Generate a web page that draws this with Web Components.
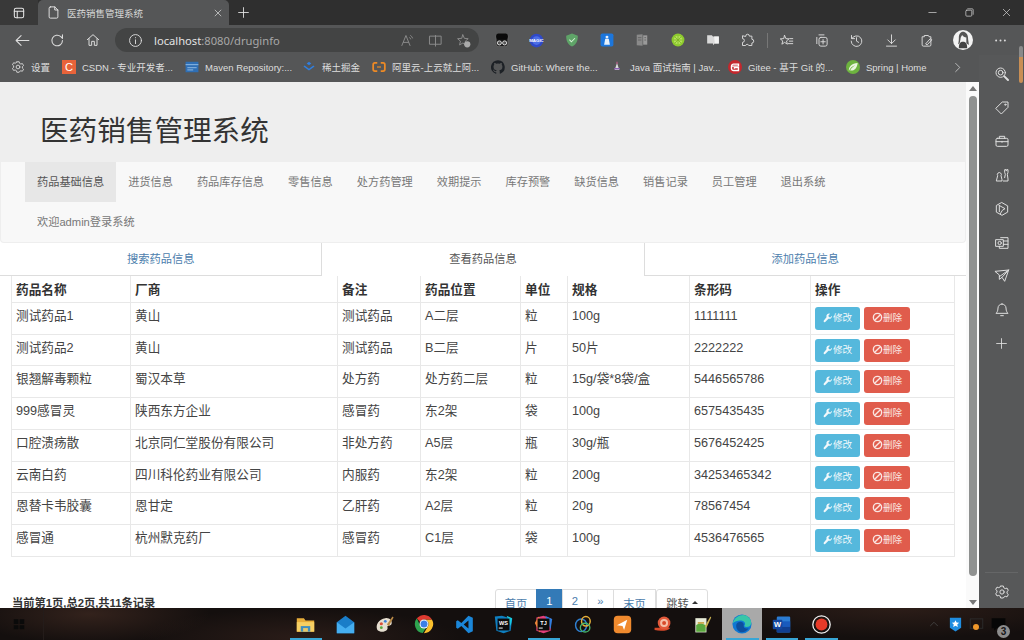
<!DOCTYPE html>
<html lang="zh">
<head>
<meta charset="utf-8">
<title>医药销售管理系统</title>
<style>
  html, body { margin: 0; height: 100%; overflow: hidden; background: #fff; }
  body { font-family: "Liberation Sans", "Noto Sans CJK SC", sans-serif; }
</style>
</head>
<body>
<browser-window>
  <tab-strip slot="tabs"></tab-strip>
  <nav-toolbar slot="toolbar"></nav-toolbar>
  <bookmark-bar slot="bookmarks"></bookmark-bar>
  <drug-page slot="page">
    <app-header>医药销售管理系统</app-header>
    <app-nav></app-nav>
    <sub-tabs></sub-tabs>
    <drug-table></drug-table>
    <pager-bar></pager-bar>
  </drug-page>
  <page-scrollbar slot="scrollbar"></page-scrollbar>
  <side-rail slot="rail"></side-rail>
  <task-bar slot="taskbar"></task-bar>
</browser-window>

<script>
const html = String.raw;

// Line icons use currentColor, the rest carry their own colours
const line = (body, sw = 1.5) => html`<g fill="none" stroke="currentColor" stroke-width="${sw}" stroke-linecap="round" stroke-linejoin="round">${body}</g>`;
const GEAR = 'M10 3h4l.6 2.6 2.3 1.3 2.6-.8 2 3.5-2 1.8v2.6l2 1.8-2 3.5-2.6-.8-2.3 1.3L14 21h-4l-.6-2.6-2.3-1.3-2.6.8-2-3.5 2-1.8v-2.6l-2-1.8 2-3.5 2.6.8 2.3-1.3z';

const ICONS = {
  tabs: line('<rect x="4" y="4" width="16" height="16" rx="3"/><path d="M4 9h16M9 9v11"/>', 1.8),
  doc: line('<path d="M7 3h7l5 5v11a2 2 0 0 1-2 2H7a2 2 0 0 1-2-2V5a2 2 0 0 1 2-2zM14 3v5h5"/>'),
  close: line('<path d="M5 5l14 14M19 5L5 19"/>', 1.6),
  plus: line('<path d="M12 3v18M3 12h18"/>', 1.6),
  min: line('<path d="M4 12h16"/>', 1.6),
  max: line('<rect x="4" y="7" width="13" height="13" rx="2"/><path d="M8 4h10a2 2 0 0 1 2 2v10"/>', 1.6),
  back: line('<path d="M21 12H3M10 5l-7 7 7 7"/>'),
  refresh: line('<path d="M19 12a7.5 7.5 0 1 1-2.3-5.4L19 9V4"/>'),
  home: line('<path d="M3.5 11.5L12 4l8.5 7.5M6 10v10h4v-6h4v6h4V10"/>'),
  info: line('<circle cx="12" cy="12" r="9.5"/><path d="M12 11v6M12 7.4v.3"/>'),
  aloud: line('<path d="M3 20L9.5 4 16 20M5.5 15h8M17 4c1.5 1 2.5 2.4 3 4M15.5 7.5c.8.5 1.3 1.2 1.5 2"/>'),
  split: line('<path d="M12 4v17M3 5h18v13H3z"/>'),
  favadd: line('<path d="M11 3l2.4 5.6 6.1.5-4.6 4 1.4 6L11 16l-5.3 3.1 1.4-6-4.6-4 6.1-.5z"/>') + '<circle cx="18" cy="18" r="5" fill="#aaa"/>',
  gear: line(`<path d="${GEAR}"/><circle cx="12" cy="12" r="3.2"/>`),
  puzzle: line('<path d="M9 5a3 3 0 0 1 6 0h4v5a3 3 0 0 1 0 6v4h-5a2.6 2.6 0 0 0-5 0H4v-5a3 3 0 0 0 0-6V5z"/>'),
  favs: line('<path d="M9 4l2 5 5 .4-4 3.3 1.4 5.2L9 15l-4.4 2.9L6 12.7 2 9.4 7 9zM17 9h5M16.5 13h5.5M15 17h7"/>'),
  collect: line('<path d="M8 3h8M4.500 7v10"/><rect x="8" y="7" width="13" height="14" rx="3"/><path d="M14.500 10.500v7M11 14h7"/>'),
  history: line('<path d="M4 4v5h5M4.500 9a8.500 8.500 0 1 1-1 4M12 7.500V13l3.500 2"/>'),
  download: line('<path d="M12 3v14M6 11l6 6 6-6M4 21h16"/>'),
  perf: line('<path d="M9 4h6l1 2h3v13a2 2 0 0 1-2 2H7a2 2 0 0 1-2-2V6h3zM11 17l7-8 2.500 2-7 7.500z"/>'),
  dots: '<g fill="currentColor"><circle cx="5" cy="12" r="1.6"/><circle cx="12" cy="12" r="1.6"/><circle cx="19" cy="12" r="1.6"/></g>',
  chev: line('<path d="M8 3l9 9-9 9"/>', 1.6),
  lens: line('<circle cx="10" cy="10" r="7"/><circle cx="10" cy="10" r="3.5"/><path d="M15.500 15.500l5.500 5.500" stroke-width="3"/>'),
  tag: line('<path d="M13 3h8v8L11 21l-8-8z"/><circle cx="17" cy="7" r="1"/>'),
  brief: line('<rect x="3" y="8" width="18" height="12" rx="2"/><path d="M8 8V5h8v3M3 13h18M12 12.500v1.500"/>'),
  chess: line('<path d="M4 21h8v-2l-1.500-6a3 3 0 1 0-5 0L4 19zM14 21h7v-3l-1-7 1-3V4h-2v1.500h-1V4h-2v4l1 3-1 5"/>'),
  bing: line('<path d="M12 2.500l8.500 4.800v9.400L12 21.500l-8.500-4.800V7.300zM7.500 6.500l9 5-4 2.500-3 5"/><path d="M8 7v9"/>'),
  outlook: line('<path d="M10 4h11v16H8v-3M3 7h11v10H3zM14 9h7M14 14h7"/><circle cx="8.500" cy="12" r="2.500"/>'),
  plane: line('<path d="M2 5l20-2-6 17-4-6-4 3v-6zM22 3L8 13M22 3l-10 11"/>'),
  bell: line('<path d="M12 3a6 6 0 0 0-6 6c0 5-2 7-3 8h18c-1-1-3-3-3-8a6 6 0 0 0-6-6zM10 20.500h4"/>'),
  wrench: '<path fill="currentColor" d="M21.500 6.500l-4 4-3.500-1-1-3.500 4-4a6.500 6.500 0 0 0-8.600 8L2 17.800a2.400 2.400 0 0 0 4 3.200l7-7.400a6.500 6.500 0 0 0 8.500-7.100z"/>',
  ban: line('<circle cx="12" cy="12" r="9"/><path d="M5.800 18.200L18.200 5.800"/>', 3),

  // Extensions
  glasses: '<rect x="2" y="1" width="20" height="22" rx="4" fill="#151515" stroke="#888" stroke-width=".8"/><rect x="2" y="1" width="20" height="10" rx="4" fill="#0a0a0a"/><g fill="#555" stroke="#eee" stroke-width="1.500"><circle cx="7.500" cy="17" r="3.500"/><circle cx="16.500" cy="17" r="3.500"/></g>',
  magic: '<circle cx="12" cy="12" r="11" fill="#2f49c8"/><circle cx="12" cy="12" r="7" fill="#4c6ee8"/><text x="12" y="14.500" font-size="7" font-weight="700" text-anchor="middle" fill="#fff" font-family="Liberation Sans">MAGIC</text>',
  shield: '<path d="M12 1l10 3.500c0 9-2.500 15-10 18.500C4.500 19.500 2 13.500 2 4.500z" fill="#5fa468"/><path d="M7.500 11.500l3.500 3.500 6-6" fill="none" stroke="#d8f0d8" stroke-width="1.800"/>',
  bluebag: '<rect x="1" y="1" width="22" height="22" rx="3" fill="#1c76dc"/><path d="M7 20l2-10h6l2 10z" fill="#e6f0fa"/><circle cx="12" cy="7" r="2.500" fill="#e6f0fa"/>',
  graybook: '<path d="M3 3l10-1v20l-10-1z" fill="#8a8a8a"/><path d="M14 4h7v16h-7z" fill="#9a9a9a"/><path d="M5 8h6M5 12h6M16 8h3M16 12h3" stroke="#5a5a5a" stroke-width="1.300"/>',
  lime: '<circle cx="12" cy="12" r="11" fill="#8ecb2e"/><circle cx="12" cy="12" r="7.500" fill="#b5e25a"/><path d="M12 4v16M4 12h16M6.500 6.500l11 11M17.500 6.500l-11 11" stroke="#7ab322" stroke-width="1.300"/>',
  flag: '<path d="M2 4h8l2 2h10v12h-7l-3 3v-3H2z" fill="#d9d9d9"/><path d="M14 6h8v12h-7z" fill="#f2f2f2"/>',
  avatar: '<circle cx="12" cy="12" r="12" fill="#f3f3f3"/><path d="M7 22c0-5 1-8 5-8s5 3 5 8z" fill="#444"/><path d="M7 9c0-4 2-7 5-7s6 3 6 7c0 3 1 6 1 9l-3-2V9c-2 0-4-1-5-3-1 2-2 3-2 5l-1 5-2 1c1-3 1-5 1-8z" fill="#555"/>',

  // Bookmarks
  csdn: '<rect width="24" height="24" fill="#e8633a"/><text x="12" y="19" font-size="19" text-anchor="middle" fill="#fff" font-family="Liberation Sans">C</text>',
  maven: '<rect x="1" y="3" width="22" height="18" fill="#2f6fb5"/><path d="M1 8h22" stroke="#9cc3ea" stroke-width="1.500"/><path d="M4 13h16M4 17h10" stroke="#7aa9d8" stroke-width="2"/>',
  juejin: '<path d="M12 3l4 3-4 3-4-3z" fill="#2f7fe0"/><path d="M4.500 9.500L12 15l7.500-5.500 2 1.500-9.500 7-9.500-7z" fill="#2f7fe0"/>',
  aliyun: '<path d="M9 5H5a3 3 0 0 0-3 3v8a3 3 0 0 0 3 3h4M15 5h4a3 3 0 0 1 3 3v8a3 3 0 0 1-3 3h-4" fill="none" stroke="#ee8a25" stroke-width="3"/><path d="M8.500 12h7" stroke="#ee8a25" stroke-width="2"/>',
  github: '<path fill="#1d2126" d="M12 .3a12 12 0 0 0-3.800 23.400c.6.100.8-.3.800-.6v-2.200c-3.300.7-4-1.600-4-1.600-.6-1.400-1.400-1.800-1.400-1.800-1-.7.100-.7.100-.7 1.200 0 1.900 1.200 1.900 1.200 1 1.800 2.800 1.300 3.500 1 0-.8.400-1.300.7-1.600-2.700-.3-5.500-1.300-5.500-6 0-1.200.5-2.300 1.300-3.100-.2-.4-.6-1.600 0-3.200 0 0 1-.3 3.400 1.200a11.500 11.500 0 0 1 6 0c2.300-1.500 3.300-1.200 3.300-1.200.6 1.600.2 2.800 0 3.200.9.800 1.300 1.900 1.300 3.200 0 4.600-2.800 5.600-5.500 5.900.5.400.9 1 .9 2.200v3.300c0 .3.1.7.8.6A12 12 0 0 0 12 .3"/>',
  guide: '<path d="M12 5l4 12H8z" fill="#ddd"/><path d="M7 15h10" stroke="#8a5fb0" stroke-width="2.500"/><path d="M11 3h2v4h-2z" fill="#c05a8a"/>',
  gitee: '<circle cx="12" cy="12" r="12" fill="#c4272d"/><path d="M6 10.500h12V7H9.500A3.500 3.500 0 0 0 6 10.500v4A3.500 3.500 0 0 0 9.500 18H18v-5h-7v2" fill="none" stroke="#fff" stroke-width="2.400"/>',
  spring: '<circle cx="12" cy="12" r="12" fill="#6db33f"/><path d="M5 19c-1-8 5-13 15-14-1 9-6 14-13 13 2-4 5-7 9-9-5 1-9 5-11 10z" fill="#eaf6df"/>',

  // Taskbar
  win: '<path fill="#0a0a0a" d="M3 4h8v8H3zM13 4h8v8h-8zM3 14h8v7H3zM13 14h8v7h-8z"/>',
  folder: '<path d="M1 4h9l2 3h11v14H1z" fill="#e7ad3a"/><path d="M1 9h22v12H1z" fill="#f6cf63"/><path d="M6 14h12v7H6z" fill="#3f8fc0"/><path d="M9 16.500h6V21H9z" fill="#e8c768"/>',
  mail: '<path d="M1 9l11-8 11 8v14H1z" fill="#1a7dc8"/><path d="M1 9l11 8 11-8v14H1z" fill="#45aef0"/>',
  palette: '<path d="M3 19C0 12 5 5 13 4c5-1 9 3 8 7-1 3-4 2-5 3s1 3-1 5c-3 3-9 3-12 0z" fill="#e6ded0"/><circle cx="8" cy="11" r="2" fill="#d8503a"/><circle cx="13" cy="8" r="1.800" fill="#3a7fd8"/><circle cx="8" cy="16" r="1.800" fill="#58a83e"/><path d="M15 12l7-10 1.500 1-6 11z" fill="#b98a46"/>',
  chrome: '<path d="M3.400 5.200A11 11 0 0 0 10.500 22.900l3.900-6.300a5.500 5.500 0 0 1-7-2.500z" fill="#2ea44f"/><path d="M21.500 6.500H12a5.500 5.500 0 0 1 4.800 8.200l-4.900 8.300A11 11 0 0 0 21.500 6.500z" fill="#fbc02d"/><path d="M3.400 5.200A11 11 0 0 1 21.500 6.500H12a5.500 5.500 0 0 0-4.800 3l-3.800-4.300z" fill="#dd3a30"/><circle cx="12" cy="12" r="5.400" fill="#fff"/><circle cx="12" cy="12" r="4.200" fill="#3b7fe8"/>',
  vscode: '<path fill-rule="evenodd" fill="#1b86d8" d="M17 1l5.500 2.500v17L17 23 8 14l-4.500 3.500L1.500 16v-8l2-1.500L8 10zM17 7l-6 5 6 5z"/>',
  ws: '<path d="M1 2l9-1 13 4-2 15-9 3-9-3z" fill="#0f7fc0"/><path d="M16 1l7 3-2 10z" fill="#18c9e0"/><rect x="4.500" y="4.500" width="15" height="15" fill="#0b0b0b"/><text x="12" y="12" font-size="7" font-weight="700" text-anchor="middle" fill="#fff" font-family="Liberation Sans">WS</text><path d="M6 16.500h5" stroke="#fff" stroke-width="1.200"/>',
  tj: '<path d="M3 3l9-2 10 4-1 15-9 3-9-3z" fill="#e23f7c"/><path d="M14 1l9 4-2 13z" fill="#2f7fe0"/><path d="M1 10l5-8 4 8-3 12z" fill="#f0883a"/><rect x="4.500" y="4.500" width="15" height="15" fill="#0b0b0b"/><text x="12" y="12" font-size="7" font-weight="700" text-anchor="middle" fill="#fff" font-family="Liberation Sans">TJ</text><path d="M6 16.500h5" stroke="#fff" stroke-width="1.200"/>',
  rings: '<g fill="none" stroke-width="1.800"><ellipse cx="9" cy="13" rx="7" ry="8" stroke="#2f7fd0"/><ellipse cx="15" cy="8" rx="5.500" ry="6" stroke="#e9b13a"/><ellipse cx="14" cy="16" rx="6" ry="5.500" stroke="#46b56a"/></g>',
  arrowapp: '<rect x="1" y="1" width="22" height="22" rx="5" fill="#f08a2e"/><path d="M5 13l13-7-4 13-2-5z" fill="#fff"/>',
  snail: '<path d="M2 19c8 2 17 1 20-3H2z" fill="#d84a2a"/><circle cx="14" cy="10" r="8" fill="#e2593a"/><circle cx="14" cy="10" r="5" fill="#f5c0a8"/><circle cx="14" cy="10" r="2.500" fill="#d84a2a"/>',
  notepad: '<path d="M3 4h14v18H3z" fill="#e8ecd8"/><path d="M4 13c3-3 7-3 12 0v8H4z" fill="#5aa83e"/><path d="M6 9h8v2H6z" fill="#c9a03e"/><path d="M15 14l7-12 1 1-6 13z" fill="#c9b050"/>',
  edge: '<circle cx="12" cy="12" r="11.500" fill="#0f78d4"/><path d="M1 11C3 3 12-1 18 2.500c4 2.500 6 7 4.500 10.500-1.500 3-6 3.500-8 1.500 2-1.500 1.500-5-1.500-6-4-1.500-9 0-12 2.500z" fill="#38c6a8"/><path d="M5 14c0-3 3-5 6.500-4.500 2 .3 3 2 2.500 4-.5 3 2 5 6 3.500-2 3-5 5-8 5-4-.5-7-4-7-8z" fill="#0d4f9e"/>',
  word: '<rect x="6" y="2" width="17" height="20" rx="1.500" fill="#2b7cd3"/><path d="M6 8h17v7H6z" fill="#185abd"/><path d="M6 15h17v7H6z" fill="#103f91"/><rect x="1" y="6" width="12" height="12" rx="1" fill="#14479e"/><text x="7" y="15.500" font-size="9.500" font-weight="700" text-anchor="middle" fill="#fff" font-family="Liberation Sans">W</text>',
  record: '<circle cx="12" cy="12" r="11" fill="none" stroke="#f2f2f2" stroke-width="1.600"/><circle cx="12" cy="12" r="7.500" fill="#e83a28"/>',
  up: line('<path d="M6 15l6-6 6 6"/>', 1.500),
  star: '<path d="M3 1h18v16l-9 6-9-6z" fill="#1f8de0"/><path d="M12 5l1.800 3.800 4 .4-3 2.800.9 4-3.700-2.100L8.300 16l.9-4-3-2.800 4-.4z" fill="#fff"/>',
  tray: '<rect x="2" y="3" width="20" height="15" fill="none" stroke="#2c2c2c" stroke-width="1.500"/>',
  chat: '<path d="M1 2h22v16H9l-4 4v-4H1z" fill="#060606"/>'
};

class UiIcon extends HTMLElement {
  connectedCallback() {
    const size = this.getAttribute('size') || 16;
    if (!this.shadowRoot) this.attachShadow({mode: 'open'});
    this.shadowRoot.innerHTML = html`
      <style>
        :host { display: inline-flex; flex: none; align-items: center; justify-content: center; }
        svg { display: block; }
      </style>
      <svg width="${size}" height="${size}" viewBox="0 0 24 24">${ICONS[this.getAttribute('name')] || ''}</svg>`;
  }
}
customElements.define('ui-icon', UiIcon);

// Small helper, every class below only has to write its own template
class ShadowEl extends HTMLElement {
  constructor() {
    super();
    this.attachShadow({mode: 'open'});
    this.shadowRoot.innerHTML = this.markup();
  }
  markup() { return '<slot></slot>'; }
}

class BrowserWindow extends ShadowEl {
  markup() {
    return html`
      <style>
        :host { display: flex; flex-direction: column; width: 1024px; height: 640px; overflow: hidden; }
        .main { display: flex; height: 553px; }
        .col { width: 979px; display: flex; flex-direction: column; }
        .view { display: flex; height: 526px; }
      </style>
      <slot name="tabs"></slot>
      <slot name="toolbar"></slot>
      <div class="main">
        <div class="col">
          <slot name="bookmarks"></slot>
          <div class="view"><slot name="page"></slot><slot name="scrollbar"></slot></div>
        </div>
        <slot name="rail"></slot>
      </div>
      <slot name="taskbar"></slot>`;
  }
}
customElements.define('browser-window', BrowserWindow);

class TabStrip extends ShadowEl {
  markup() {
    return html`
      <style>
        :host { display: flex; height: 25px; background: #2f2f2f; color: #e6e6e6;
          font: 9.5px "Liberation Sans", "Noto Sans CJK SC", sans-serif; }
        .left { width: 38px; display: flex; align-items: center; justify-content: center; background: #393939; }
        .tab { width: 191px; display: flex; align-items: center; background: #555657; border-radius: 5px 5px 0 0; padding: 0 6px 0 8px; box-sizing: border-box; }
        .title { margin-left: 6px; flex: 1; color: #d8d8d8; }
        .new { width: 29px; display: flex; align-items: center; justify-content: center; }
        .ctl { margin-left: auto; margin-right: -1px; display: flex; }
        .ctl ui-icon { width: 37px; height: 25px; color: #d0d0d0; }
      </style>
      <div class="left"><ui-icon name="tabs" size="14"></ui-icon></div>
      <div class="tab">
        <ui-icon name="doc" size="15"></ui-icon>
        <span class="title">医药销售管理系统</span>
        <ui-icon name="close" size="10"></ui-icon>
      </div>
      <div class="new"><ui-icon name="plus" size="13"></ui-icon></div>
      <div class="ctl">
        <ui-icon name="min" size="11"></ui-icon>
        <ui-icon name="max" size="11"></ui-icon>
        <ui-icon name="close" size="11"></ui-icon>
      </div>`;
  }
}
customElements.define('tab-strip', TabStrip);

class NavToolbar extends ShadowEl {
  markup() {
    const exts = ['glasses', 'magic', 'shield', 'bluebag', 'graybook', 'lime', 'flag'];
    const tools = ['favs', 'collect', 'history', 'download', 'perf'];
    return html`
      <style>
        :host { display: flex; align-items: center; height: 30px; padding-left: 5px; background: #555657; color: #dcdcdc; }
        .btn { width: 35px; height: 30px; display: flex; align-items: center; justify-content: center; }
        .pill { width: 364px; height: 24px; margin: 0 5px; box-sizing: border-box; padding: 0 8px 0 13px; display: flex; align-items: center;
          border-radius: 12px; background: #434444; }
        .url { margin-left: 11px; flex: 1; font: 11.2px "Noto Sans", sans-serif; color: #a8a8a8; white-space: nowrap; }
        .url b { font-weight: 400; color: #e2e2e2; }
        .pill ui-icon.dim { color: #8d8d8d; margin-left: 13px; }
        .sep { width: 1px; height: 15px; background: #777; margin: 0 1px 0 1px; }
        .tool { width: 35.2px; }
      </style>
      <div class="btn"><ui-icon name="back" size="17"></ui-icon></div>
      <div class="btn"><ui-icon name="refresh" size="17"></ui-icon></div>
      <div class="btn"><ui-icon name="home" size="16"></ui-icon></div>
      <div class="pill">
        <ui-icon name="info" size="15"></ui-icon>
        <span class="url"><b>localhost</b>:8080/druginfo</span>
        <ui-icon class="dim" name="aloud" size="15"></ui-icon>
        <ui-icon class="dim" name="split" size="15"></ui-icon>
        <ui-icon class="dim" name="favadd" size="15"></ui-icon>
      </div>
      ${exts.map(n => `<div class="btn tool"><ui-icon name="${n}" size="${n === 'magic' ? 15 : 14}"></ui-icon></div>`).join('')}
      <div class="btn tool"><ui-icon name="puzzle" size="15"></ui-icon></div>
      <div class="sep"></div>
      ${tools.map(n => `<div class="btn tool"><ui-icon name="${n}" size="15"></ui-icon></div>`).join('')}
      <div class="btn" style="width:38px"><ui-icon name="avatar" size="20"></ui-icon></div>
      <div class="btn" style="width:36px"><ui-icon name="dots" size="15"></ui-icon></div>`;
  }
}
customElements.define('nav-toolbar', NavToolbar);

class BookmarkBar extends ShadowEl {
  markup() {
    // [icon, text, width of the whole item]
    const items = [
      ['gear', '设置', 51], ['csdn', 'CSDN - 专业开发者...', 123], ['maven', 'Maven Repository:...', 117],
      ['juejin', '稀土掘金', 70], ['aliyun', '阿里云-上云就上阿...', 119], ['github', 'GitHub: Where the...', 119],
      ['guide', 'Java 面试指南 | Jav...', 118], ['gitee', 'Gitee - 基于 Git 的...', 118], ['spring', 'Spring | Home', 106]
    ];
    return html`
      <style>
        :host { display: flex; align-items: center; height: 27px; box-sizing: border-box; padding: 0 0 3px 11px; background: #555657; color: #dedede;
          font: 9.5px "Liberation Sans", "Noto Sans CJK SC", sans-serif; }
        .item { display: flex; align-items: center; flex: none; gap: 6px; white-space: nowrap; }
      </style>
      ${items.map(([i, t, w]) => `<div class="item" style="width:${w}px"><ui-icon name="${i}" size="14"></ui-icon><span>${t}</span></div>`).join('')}
      <ui-icon name="chev" size="11"></ui-icon>`;
  }
}
customElements.define('bookmark-bar', BookmarkBar);

class DrugPage extends ShadowEl {
  markup() {
    return html`
      <style>
        :host { display: block; width: 966px; height: 526px; overflow: hidden; background: #fff; }
      </style>
      <slot></slot>`;
  }
}
customElements.define('drug-page', DrugPage);

class AppHeader extends ShadowEl {
  markup() {
    return html`
      <style>
        :host { display: block; height: 80px; box-sizing: border-box; padding: 31px 0 0 40px; background: #eee; }
        h1 { margin: 0; font-size: 28.6px; line-height: 36px; font-weight: 400; color: #333; }
      </style>
      <h1><slot></slot></h1>`;
  }
}
customElements.define('app-header', AppHeader);

class AppNav extends ShadowEl {
  markup() {
    const items = ['药品基础信息', '进货信息', '药品库存信息', '零售信息', '处方药管理', '效期提示', '库存预警', '缺货信息', '销售记录', '员工管理', '退出系统', '欢迎admin登录系统'];
    return html`
      <style>
        :host { display: flex; flex-wrap: wrap; box-sizing: border-box; height: 81px; padding: 0 60px 0 24px;
          background: #f8f8f8; border: 1px solid #eee; border-top: 0; border-radius: 0 0 4px 4px; font-size: 11.2px; color: #777; }
        a { display: block; height: 40px; line-height: 41.500px; padding: 0 12px; }
        a.on { background: #e7e7e7; color: #555; }
      </style>
      ${items.map((t, i) => `<a class="${i ? '' : 'on'}">${t}</a>`).join('')}`;
  }
}
customElements.define('app-nav', AppNav);

class SubTabs extends ShadowEl {
  markup() {
    return html`
      <style>
        :host { display: flex; height: 33px; font-size: 11.25px; }
        a { flex: 1; box-sizing: border-box; text-align: center; line-height: 33px; color: #4d80ad; border-bottom: 1px solid #ddd; }
        a.on { color: #555; border: 1px solid #ddd; border-top: 0; border-bottom: 0; }
      </style>
      <a>搜索药品信息</a><a class="on">查看药品信息</a><a>添加药品信息</a>`;
  }
}
customElements.define('sub-tabs', SubTabs);

class UiBtn extends ShadowEl {
  markup() {
    return html`
      <style>
        :host { display: inline-flex; align-items: center; justify-content: center; box-sizing: border-box; width: 45px; height: 23px;
          padding-bottom: 1px; border-radius: 3px; background: #55b8dc; color: #f2f8fb; font-size: 9.6px; }
        :host([kind="danger"]) { width: 46px; background: #e05c4c; color: #fae6e2; }
      </style>
      <slot></slot>`;
  }
}
customElements.define('ui-btn', UiBtn);

const DRUGS = [
  ['测试药品1', '黄山', '测试药品', 'A二层', '粒', '100g', '1111111'],
  ['测试药品2', '黄山', '测试药品', 'B二层', '片', '50片', '2222222'],
  ['银翘解毒颗粒', '蜀汉本草', '处方药', '处方药二层', '粒', '15g/袋*8袋/盒', '5446565786'],
  ['999感冒灵', '陕西东方企业', '感冒药', '东2架', '袋', '100g', '6575435435'],
  ['口腔溃疡散', '北京同仁堂股份有限公司', '非处方药', 'A5层', '瓶', '30g/瓶', '5676452425'],
  ['云南白药', '四川科伦药业有限公司', '内服药', '东2架', '粒', '200g', '34253465342'],
  ['恩替卡韦胶囊', '恩甘定', '乙肝药', 'A2层', '粒', '20g', '78567454'],
  ['感冒通', '杭州默克药厂', '感冒药', 'C1层', '袋', '100g', '4536476565']
];

// The rows of the screenshot are 31.75px high, table rows snap to whole pixels
const ROW_HEIGHTS = [32, 31, 32, 32, 32, 31, 32, 32];

class DrugTable extends ShadowEl {
  markup() {
    const heads = ['药品名称', '厂商', '备注', '药品位置', '单位', '规格', '条形码', '操作'];
    const widths = [119, 207, 83, 100, 47, 122, 121, 144];
    const ops = html`
      <ui-btn><ui-icon name="wrench" size="10"></ui-icon>修改</ui-btn>
      <ui-btn kind="danger"><ui-icon name="ban" size="11"></ui-icon>删除</ui-btn>`;
    return html`
      <style>
        :host { display: block; padding-left: 11px; font-size: 12.67px; color: #444; }
        table { width: 943px; table-layout: fixed; border-collapse: collapse; }
        th, td { border: 1px solid #e8e8e8; text-align: left; vertical-align: top; line-height: 18px; white-space: nowrap; }
        th { height: 26px; padding: 5px 4px 2px; box-sizing: border-box; color: #333; font-weight: 700; border-top: 0; }
        td { box-sizing: border-box; padding: 4px 4px 2px; }
        .ops { display: flex; gap: 4px; }
      </style>
      <table>
        <colgroup>${widths.map(w => `<col style="width:${w}px">`).join('')}</colgroup>
        <thead><tr>${heads.map(h => `<th>${h}</th>`).join('')}</tr></thead>
        <tbody>
          ${DRUGS.map((r, i) => `<tr style="height:${ROW_HEIGHTS[i]}px">${r.map(c => `<td>${c}</td>`).join('')}<td><div class="ops">${ops}</div></td></tr>`).join('')}
        </tbody>
      </table>`;
  }
}
customElements.define('drug-table', DrugTable);

class PagerBar extends ShadowEl {
  markup() {
    return html`
      <style>
        :host { display: flex; align-items: flex-start; margin-top: 32px; padding: 0 258px 0 12px; font-size: 11.25px; color: #333; white-space: nowrap; }
        .info { font-weight: 700; padding-top: 5px; }
        .pages { margin-left: auto; display: flex; height: 30px; box-sizing: border-box; }
        a { display: block; padding-top: 5px; border: 1px solid #ddd; margin-left: -1px; color: #4d80ad; text-align: center; box-sizing: border-box; }
        a:first-child { border-radius: 3px 0 0 3px; margin-left: 0; }
        a.on { background: #337ab7; border-color: #337ab7; color: #fff; }
        .jump { display: flex; justify-content: center; gap: 3px; width: 52px; padding-top: 5px; border: 1px solid #ddd; border-radius: 3px; color: #555; box-sizing: border-box; }
        .caret { width: 0; height: 0; margin-top: 6px; border: 3px solid transparent; border-top: 0; border-bottom: 3px solid #333; }
      </style>
      <span class="info">当前第1页,总2页,共11条记录</span>
      <div class="pages">
        <a style="width:42px">首页</a><a class="on" style="width:27px">1</a><a style="width:26px">2</a><a style="width:27px">»</a><a style="width:43px">末页</a>
        <div class="jump">跳转<i class="caret"></i></div>
      </div>`;
  }
}
customElements.define('pager-bar', PagerBar);

class PageScrollbar extends ShadowEl {
  markup() {
    return html`
      <style>
        :host { display: flex; flex-direction: column; align-items: center; width: 13px; height: 526px; background: #fafafa; }
        .arr { width: 0; height: 0; border: 4px solid transparent; flex: none; }
        .up { margin-top: 4px; border-top: 0; border-bottom: 5px solid #777; }
        .thumb { width: 8px; height: 480px; margin-top: 5px; border-radius: 4px; background: #8f9190; }
        .down { margin-top: auto; margin-bottom: 3px; border-bottom: 0; border-top: 5px solid #777; }
      </style>
      <i class="arr up"></i><div class="thumb"></div><i class="arr down"></i>`;
  }
}
customElements.define('page-scrollbar', PageScrollbar);

class SideRail extends ShadowEl {
  markup() {
    const icons = ['lens', 'tag', 'brief', 'chess', 'bing', 'outlook', 'plane', 'bell', 'plus'];
    return html`
      <style>
        :host { position: relative; display: flex; flex-direction: column; align-items: center; width: 45px; height: 553px; box-sizing: border-box;
          padding: 2px 0 0; background: #575859; color: #dedede; }
        .cell { height: 33.75px; display: flex; align-items: center; justify-content: center; }
        .thumb { position: absolute; top: -9px; right: 1px; width: 4px; height: 37px; border-radius: 2px;
          background: linear-gradient(#8a8a8a 0 30%, #c98f55 30%); }
        .foot { margin-top: auto; width: 33px; height: 36px; padding-top: 3px; box-sizing: border-box; display: flex; align-items: center; justify-content: center;
          border-top: 1px solid #656667; }
      </style>
      <div class="thumb"></div>
      ${icons.map(n => `<div class="cell"><ui-icon name="${n}" size="${n === 'plus' ? 13 : 16}"></ui-icon></div>`).join('')}
      <div class="foot"><ui-icon name="gear" size="16"></ui-icon></div>`;
  }
}
customElements.define('side-rail', SideRail);

class TaskBar extends ShadowEl {
  markup() {
    const apps = [
      ['folder', 'run'], ['mail', ''], ['palette', ''], ['chrome', ''], ['vscode', ''], ['ws', ''], ['tj', 'run'],
      ['rings', ''], ['arrowapp', ''], ['snail', ''], ['notepad', ''], ['edge', 'run act'], ['word', 'run'], ['record', 'run']
    ];
    return html`
      <style>
        :host { position: relative; display: flex; align-items: stretch; height: 32px; color: #444;
          background: radial-gradient(120px 30px at 90px 6px, #33221c, transparent), radial-gradient(160px 30px at 300px 30px, #2a1c18, transparent), radial-gradient(200px 30px at 900px 0, #2c1d18, transparent), #140f0e; }
        .start { width: 44px; padding-right: 6px; display: flex; align-items: center; justify-content: center; border-right: 1px solid #241c1a; box-sizing: border-box; }
        .apps { display: flex; margin-left: 241.500px; }
        .app { position: relative; width: 39.7px; display: flex; align-items: center; justify-content: center; }
        .run::after { content: ""; position: absolute; left: 4px; right: 3px; bottom: 0; height: 2px; background: #38a6d6; }
        .act { background: #a9a9a9; }
        .tray { margin-left: auto; display: flex; align-items: center; padding-right: 18.500px; }
        .tray ui-icon + ui-icon { margin-left: 6.500px; }
        .dot { position: absolute; right: 45px; top: 16px; width: 6px; height: 6px; border-radius: 50%; background: #f0972a; }
        .badge { position: absolute; right: 14px; top: 17px; width: 13px; height: 13px; border-radius: 50%; background: #8d8d8d; color: #161616;
          font-size: 10px; font-weight: 700; line-height: 13px; text-align: center; }
      </style>
      <div class="start"><ui-icon name="win" size="14"></ui-icon></div>
      <div class="apps">
        ${apps.map(([n, c]) => `<div class="app ${c}"><ui-icon name="${n}" size="${n === 'edge' || n === 'chrome' ? 20 : 19}"></ui-icon></div>`).join('')}
      </div>
      <div class="tray">
        <ui-icon name="up" size="14"></ui-icon>
        <ui-icon name="star" size="15"></ui-icon>
        <ui-icon name="tray" size="15"></ui-icon>
        <ui-icon name="chat" size="15"></ui-icon>
      </div>
      <i class="dot"></i>
      <span class="badge">3</span>`;
  }
}
customElements.define('task-bar', TaskBar);
</script>
</body>
</html>
